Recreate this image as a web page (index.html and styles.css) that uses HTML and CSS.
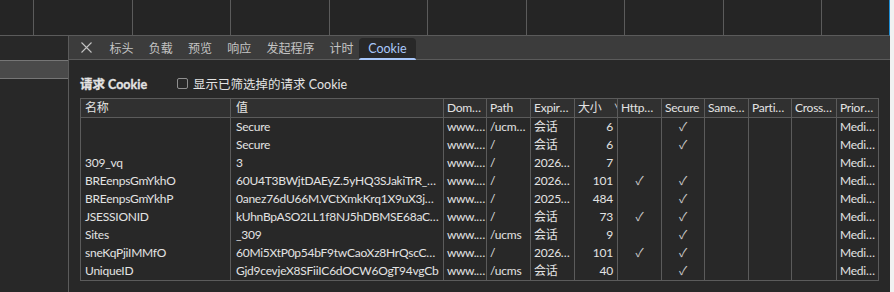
FILE: index.html
```html
<!DOCTYPE html>
<html lang="zh-CN">
<head>
    <meta charset="UTF-8">
    <title>Cookie</title>
    <link rel="stylesheet" href="styles.css">
</head>
<body>
    <div class="app">
        <div class="main">
            <div class="overview">
                <div class="ov-col"></div>
                <div class="ov-col"></div>
                <div class="ov-col"></div>
                <div class="ov-col"></div>
                <div class="ov-col"></div>
                <div class="ov-col"></div>
                <div class="ov-col"></div>
                <div class="ov-col"></div>
                <div class="ov-col"></div>
                <div class="ov-col last"></div>
            </div>

            <div class="panes">
                <div class="sidebar">
                    <div class="sidebar-row"></div>
                </div>

                <div class="detail">
                    <div class="tabbar">
                        <div class="close-btn">
                            <svg width="11" height="11" viewBox="0 0 11 11">
                                <path d="M0.5 0.5 L10.5 10.5 M10.5 0.5 L0.5 10.5" stroke="#c4c4c4" stroke-width="1.1" fill="none"/>
                            </svg>
                        </div>
                        <div class="tab">标头</div>
                        <div class="tab">负载</div>
                        <div class="tab">预览</div>
                        <div class="tab">响应</div>
                        <div class="tab">发起程序</div>
                        <div class="tab">计时</div>
                        <div class="tab active">Cookie</div>
                    </div>

                    <div class="content">
                        <div class="toolbar">
                            <span class="section-title">请求 Cookie</span>
                            <label class="filter">
                                <span class="checkbox"></span>
                                <span>显示已筛选掉的请求 Cookie</span>
                            </label>
                        </div>

                        <table class="cookies">
                            <colgroup>
                                <col style="width:150px">
                                <col style="width:213px">
                                <col style="width:43px">
                                <col style="width:44px">
                                <col style="width:44px">
                                <col style="width:43px">
                                <col style="width:44px">
                                <col style="width:43px">
                                <col style="width:44px">
                                <col style="width:43px">
                                <col style="width:45px">
                                <col style="width:42px">
                            </colgroup>
                            <thead>
                                <tr>
                                    <th>名称</th>
                                    <th>值</th>
                                    <th>Domain</th>
                                    <th>Path</th>
                                    <th>Expires / Max-Age</th>
                                    <th class="sorted">大小<span class="sort-arrow">∨</span></th>
                                    <th>HttpOnly</th>
                                    <th class="tight">Secure</th>
                                    <th>SameSite</th>
                                    <th>Partition Key</th>
                                    <th>Cross Site</th>
                                    <th>Priority</th>
                                </tr>
                            </thead>
                            <tbody>
                                <tr>
                                    <td></td>
                                    <td>Secure</td>
                                    <td class="dom">www.hnu.edu.cn</td>
                                    <td>/ucms/site</td>
                                    <td>会话</td>
                                    <td class="num">6</td>
                                    <td class="chk"></td>
                                    <td class="chk">✓</td>
                                    <td></td>
                                    <td></td>
                                    <td></td>
                                    <td>Medium</td>
                                </tr>
                                <tr>
                                    <td></td>
                                    <td>Secure</td>
                                    <td class="dom">www.hnu.edu.cn</td>
                                    <td>/</td>
                                    <td>会话</td>
                                    <td class="num">6</td>
                                    <td class="chk"></td>
                                    <td class="chk">✓</td>
                                    <td></td>
                                    <td></td>
                                    <td></td>
                                    <td>Medium</td>
                                </tr>
                                <tr>
                                    <td>309_vq</td>
                                    <td>3</td>
                                    <td class="dom">www.hnu.edu.cn</td>
                                    <td>/</td>
                                    <td>2026-03-14T08:12:40.000Z</td>
                                    <td class="num">7</td>
                                    <td class="chk"></td>
                                    <td class="chk"></td>
                                    <td></td>
                                    <td></td>
                                    <td></td>
                                    <td>Medium</td>
                                </tr>
                                <tr>
                                    <td>BREenpsGmYkhO</td>
                                    <td>60U4T3BWjtDAEyZ.5yHQ3SJakiTrR_SIbq8XoW2eMvKcP</td>
                                    <td class="dom">www.hnu.edu.cn</td>
                                    <td>/</td>
                                    <td>2026-03-14T08:12:40.000Z</td>
                                    <td class="num">101</td>
                                    <td class="chk">✓</td>
                                    <td class="chk">✓</td>
                                    <td></td>
                                    <td></td>
                                    <td></td>
                                    <td>Medium</td>
                                </tr>
                                <tr>
                                    <td>BREenpsGmYkhP</td>
                                    <td>0anez76dU66M.VCtXmkKrq1X9uX3jwZpLk7eRt0sQ</td>
                                    <td class="dom">www.hnu.edu.cn</td>
                                    <td>/</td>
                                    <td>2025-09-21T02:33:18.000Z</td>
                                    <td class="num">484</td>
                                    <td class="chk"></td>
                                    <td class="chk">✓</td>
                                    <td></td>
                                    <td></td>
                                    <td></td>
                                    <td>Medium</td>
                                </tr>
                                <tr>
                                    <td>JSESSIONID</td>
                                    <td>kUhnBpASO2LL1f8NJ5hDBMSE68aCXq4TzWvN</td>
                                    <td class="dom">www.hnu.edu.cn</td>
                                    <td>/</td>
                                    <td>会话</td>
                                    <td class="num">73</td>
                                    <td class="chk">✓</td>
                                    <td class="chk">✓</td>
                                    <td></td>
                                    <td></td>
                                    <td></td>
                                    <td>Medium</td>
                                </tr>
                                <tr>
                                    <td>Sites</td>
                                    <td>_309</td>
                                    <td class="dom">www.hnu.edu.cn</td>
                                    <td>/ucms</td>
                                    <td>会话</td>
                                    <td class="num">9</td>
                                    <td class="chk"></td>
                                    <td class="chk">✓</td>
                                    <td></td>
                                    <td></td>
                                    <td></td>
                                    <td>Medium</td>
                                </tr>
                                <tr>
                                    <td>sneKqPjiIMMfO</td>
                                    <td>60Mi5XtP0p54bF9twCaoXz8HrQscCetYu7WnDk2</td>
                                    <td class="dom">www.hnu.edu.cn</td>
                                    <td>/</td>
                                    <td>2026-03-14T08:12:40.000Z</td>
                                    <td class="num">101</td>
                                    <td class="chk">✓</td>
                                    <td class="chk">✓</td>
                                    <td></td>
                                    <td></td>
                                    <td></td>
                                    <td>Medium</td>
                                </tr>
                                <tr>
                                    <td>UniqueID</td>
                                    <td>Gjd9cevjeX8SFiiIC6dOCW6OgT94vgCb</td>
                                    <td class="dom">www.hnu.edu.cn</td>
                                    <td>/ucms</td>
                                    <td>会话</td>
                                    <td class="num">40</td>
                                    <td class="chk"></td>
                                    <td class="chk">✓</td>
                                    <td></td>
                                    <td></td>
                                    <td></td>
                                    <td>Medium</td>
                                </tr>
                            </tbody>
                        </table>
                    </div>
                </div>
            </div>
        </div>
        <div class="scrollbar"></div>
    </div>
</body>
</html>
```

FILE: styles.css
```css
body {
    margin: 0;
    background: #282828;
    font-family: Lato, "Noto Sans CJK SC", sans-serif;
    font-size: 12px;
    color: #e3e3e3;
    overflow: hidden;
}
.app {
    display: flex;
    width: 894px;
    height: 292px;
}
.main {
    width: 890px;
    display: flex;
    flex-direction: column;
}
.scrollbar {
    width: 4px;
    background: #f1f1f1;
}

/* waterfall overview strip */
.overview {
    height: 35px;
    display: grid;
    grid-template-columns: 34px repeat(8, 98.5px) 1fr;
    background: #252525;
    border-bottom: 1px solid #5b5b5b;
    border-right: 1px solid #1e8fd6;
}
.ov-col {
    border-right: 1px solid #5b5b5b;
}
.ov-col.last {
    border-right: none;
}

.panes {
    flex: 1;
    display: flex;
    min-height: 0;
}
.sidebar {
    width: 68px;
    border-right: 1px solid #5b5b5b;
    background: #282828;
}
.sidebar-row {
    margin-top: 24px;
    height: 17px;
    background: #4a4a4a;
    border-top: 1px solid #767676;
    border-bottom: 1px solid #767676;
}

.detail {
    flex: 1;
    display: flex;
    flex-direction: column;
}
.tabbar {
    height: 23px;
    display: flex;
    align-items: stretch;
    background: #3c3c3c;
    border-bottom: 1px solid #5b5b5b;
}
.close-btn {
    width: 33px;
    display: flex;
    align-items: center;
    padding-left: 12px;
    box-sizing: border-box;
}
.tab {
    display: flex;
    align-items: center;
    padding: 0 7.6px;
    color: #c4c4c4;
    white-space: nowrap;
}
.tab.active {
    position: relative;
    margin-top: 2px;
    margin-left: -2px;
    padding: 0 9px 1px;
    background: #282828;
    border-radius: 4px 4px 0 0;
    color: #a8c7fa;
    font-size: 12.5px;
}
.tab.active::after {
    content: "";
    position: absolute;
    left: 0;
    right: 0;
    bottom: -1px;
    height: 2px;
    background: #a8c7fa;
    border-radius: 2px 2px 0 0;
}

.content {
    padding-left: 11px;
}
.toolbar {
    height: 38px;
    padding-top: 8px;
    box-sizing: border-box;
    display: flex;
    align-items: center;
}
.section-title {
    font-weight: bold;
    font-size: 12.5px;
    -webkit-text-stroke: 0.3px #e3e3e3;
}
.filter {
    display: flex;
    align-items: center;
    margin-left: 30px;
    font-size: 12.5px;
}
.checkbox {
    width: 9px;
    height: 9px;
    border: 1px solid #8f8f8f;
    border-radius: 2px;
    margin-right: 5px;
}

.cookies {
    width: 799px;
    table-layout: fixed;
    border-collapse: collapse;
    border: 1px solid #5b5b5b;
    letter-spacing: -0.25px;
}
.cookies th,
.cookies td {
    border-left: 1px solid #5b5b5b;
    border-right: 1px solid #5b5b5b;
    padding: 0 3px;
    white-space: nowrap;
    overflow: hidden;
    text-overflow: ellipsis;
    text-align: left;
    height: 18px;
    line-height: 18px;
    font-size: 12px;
}
.cookies th {
    font-weight: normal;
    background: #303030;
    border-bottom: 1px solid #5b5b5b;
}
.cookies th.sorted {
    text-overflow: clip;
}
.cookies th.tight {
    padding: 0 1px 0 3px;
    text-overflow: clip;
}
.cookies td.dom {
    padding: 0 0 0 3px;
    letter-spacing: -0.4px;
}
.sort-arrow {
    margin-left: 12px;
    font-size: 11px;
}
.cookies td:first-child,
.cookies th:first-child {
    padding-left: 4px;
}
.cookies td:nth-child(2),
.cookies th:nth-child(2) {
    padding-left: 5px;
}
.cookies td.num {
    text-align: right;
    padding-right: 4px;
}
.cookies td.chk {
    text-align: center;
    color: #c8c8c8;
}
```
